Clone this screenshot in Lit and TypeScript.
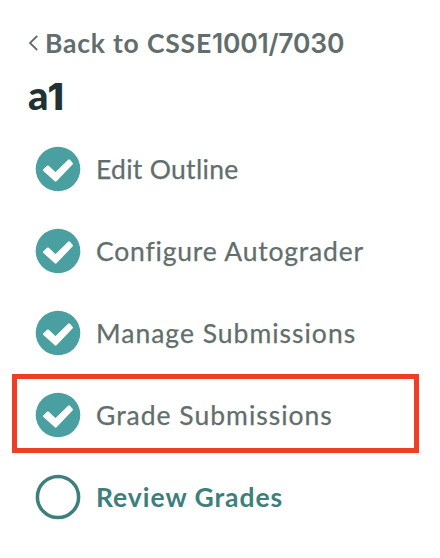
import { LitElement, html, css, svg } from "lit";
import { customElement } from "lit/decorators.js";
import { classMap } from "lit/directives/class-map.js";

interface Step {
  label: string;
  kind: string;
  done: boolean;
  marked?: boolean;
}

const steps: Step[] = [
  { label: "Edit Outline", kind: "outline", done: true },
  { label: "Configure Autograder", kind: "autograder", done: true },
  { label: "Manage Submissions", kind: "manage", done: true },
  { label: "Grade Submissions", kind: "grade", done: true, marked: true },
  { label: "Review Grades", kind: "review", done: false },
];

const doneMark = svg`
  <circle cx="23" cy="23" r="22.3" fill="#4a9fa0"></circle>
  <path d="M9.3 24.1 12.9 20.8 20.5 28 34 14.6 36.6 17.6 20.6 34.3Z"
    fill="#fff" stroke="#fff" stroke-width="2.6" stroke-linejoin="round"></path>`;
const openMark = svg`
  <circle cx="23" cy="23" r="20.6" fill="none" stroke="#3d7f7c" stroke-width="3.5"></circle>`;

@customElement("app-root")
export class AppRoot extends LitElement {
  static styles = css`
    :host {
      display: block;
      box-sizing: border-box;
      height: 558px;
      padding: 26px 21px 0 12px;
      background: #fff;
      color: #616e6c;
      font-family: Lato, "Liberation Sans", sans-serif;
      white-space: nowrap;
      overflow: hidden;
    }
    .back {
      display: flex;
      align-items: center;
      height: 34px;
      padding-left: 16px;
      font-size: 26.5px;
      font-weight: 700;
      letter-spacing: 0.8px;
    }
    .chevron { width: 12px; height: 18px; margin-right: 5px; }
    .digits { font-family: Inter, sans-serif; font-weight: 600; letter-spacing: -0.2px; }
    h1 {
      margin: 12px 0 0 16px;
      height: 46px;
      line-height: 46px;
      font-size: 40px;
      font-weight: 900;
      color: #203332;
    }
    h1 .digits { font-size: 37.5px; font-weight: 800; margin-left: -1px; }
    ol { margin: 10px 0 0; padding: 0; list-style: none; }
    li {
      display: flex;
      align-items: center;
      box-sizing: border-box;
      height: 79px;
      margin-bottom: 3px;
      padding: 3px 0 0 18px;
      border: 5px solid transparent;
      font-size: 26.5px;
      -webkit-text-stroke: 0.25px currentColor;
    }
    .marked { border-color: #ee3f24; }
    .icon { width: 46px; height: 46px; margin-right: 15px; flex: none; }
    .label { margin-bottom: 1px; }
    .outline { letter-spacing: 0.3px; }
    .autograder { letter-spacing: 0.8px; }
    .manage, .grade { letter-spacing: 1px; }
    .review {
      color: #3d7f7c;
      font-weight: 700;
      letter-spacing: 0.95px;
      -webkit-text-stroke: 0;
    }
  `;

  render() {
    return html`
      <nav>
        <div class="back">
          <svg class="chevron" viewBox="0 0 12 18">
            <path d="M9.2 2 2 9l7.2 7" fill="none" stroke="#616e6c" stroke-width="1.8"></path>
          </svg>
          <span>Back to CSSE<span class="digits">1001/7030</span></span>
        </div>
        <h1>a<span class="digits">1</span></h1>
        <ol>
          ${steps.map(
            (s) => html`<li class=${classMap({ [s.kind]: true, marked: !!s.marked })}>
              <svg class="icon" viewBox="0 0 46 46">${s.done ? doneMark : openMark}</svg>
              <span class="label">${s.label}</span>
            </li>`
          )}
        </ol>
      </nav>
    `;
  }
}
